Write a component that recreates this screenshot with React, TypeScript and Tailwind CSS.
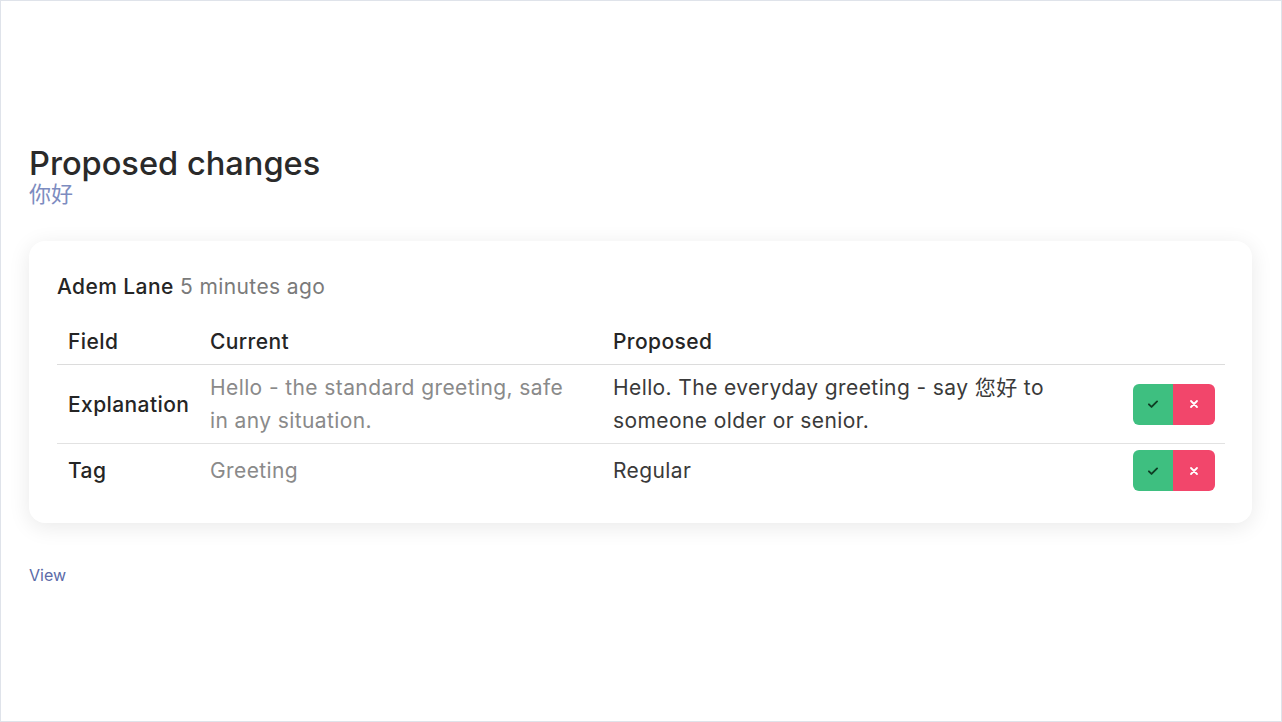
import React from 'react';

const rows = [
  {
    field: 'Explanation',
    current: 'Hello - the standard greeting, safe in any situation.',
    proposed: 'Hello. The everyday greeting - say 您好 to someone older or senior.',
  },
  {
    field: 'Tag',
    current: 'Greeting',
    proposed: 'Regular',
  },
];

const CheckIcon = () => (
  <svg width="14" height="14" viewBox="0 0 24 24" fill="none" stroke="#0f3d24" strokeWidth="3.2" strokeLinecap="round" strokeLinejoin="round">
    <path d="M5 12.5l4.5 4.5L19 7.5" />
  </svg>
);

const XIcon = () => (
  <svg width="12" height="12" viewBox="0 0 24 24" fill="none" stroke="#ffffff" strokeWidth="3.6" strokeLinecap="round">
    <path d="M6 6l12 12M18 6L6 18" />
  </svg>
);

const App = () => {
  return (
    <div
      className="w-full h-[722px] border border-[#dfe3ea] bg-white pl-7 pr-[29px] pt-[143px] text-[#2b2b2b]"
      style={{ fontFamily: 'Inter, "Noto Sans CJK SC", sans-serif' }}
    >
      <h1 className="text-[32.6px] leading-[38px] font-medium text-[#2a2a2a]">
        Proposed changes
      </h1>
      <a className="block text-[22px] leading-6 text-[#7d8cc0]">你好</a>

      <div className="mt-[35px] rounded-2xl bg-white shadow-[0_4px_22px_rgba(0,0,0,0.09)] px-7 pt-8 pb-[26px] text-[21px] tracking-[0.4px]">
        <div className="leading-7">
          <span className="font-medium text-[#252525]">Adem Lane</span>{' '}
          <span className="text-[#7a7a7a]">5 minutes ago</span>
        </div>

        <table className="w-full table-fixed mt-5">
          <colgroup>
            <col className="w-[142px]" />
            <col className="w-[403px]" />
            <col className="w-[520px]" />
            <col className="w-[103px]" />
          </colgroup>
          <thead>
            <tr className="border-b border-[#dcdcdc]">
              <th className="text-left font-medium px-[11px] pt-[7px] pb-[8px] leading-7 text-[#252525]">Field</th>
              <th className="text-left font-medium px-[11px] pt-[7px] pb-[8px] leading-7 text-[#252525]">Current</th>
              <th className="text-left font-medium px-[11px] pt-[7px] pb-[8px] leading-7 text-[#252525]">Proposed</th>
              <th />
            </tr>
          </thead>
          <tbody>
            {rows.map((row, index) => (
              <tr key={index} className={index < rows.length - 1 ? 'border-b border-[#e2e2e2]' : ''}>
                <td className="align-middle px-[11px] py-[6px] leading-[33px] font-medium text-[#252525]">{row.field}</td>
                <td className="align-middle pl-[11px] pr-[30px] py-[6px] leading-[33px] text-[#8a8a8a]">{row.current}</td>
                <td className="align-middle px-[11px] py-[6px] leading-[33px] text-[#3a3a3a]">{row.proposed}</td>
                <td className="align-middle pl-[11px] pr-[10px] py-[6px]">
                  <div className="flex justify-end">
                    <button className="flex items-center justify-center w-10 h-[41px] rounded-l-md bg-[#3ebf80]">
                      <CheckIcon />
                    </button>
                    <button className="flex items-center justify-center w-[42px] h-[41px] rounded-r-md bg-[#f2466b]">
                      <XIcon />
                    </button>
                  </div>
                </td>
              </tr>
            ))}
          </tbody>
        </table>
      </div>

      <a className="block mt-[40px] text-[16px] leading-6 text-[#5b6aa8]">View</a>
    </div>
  );
};

export default App;
